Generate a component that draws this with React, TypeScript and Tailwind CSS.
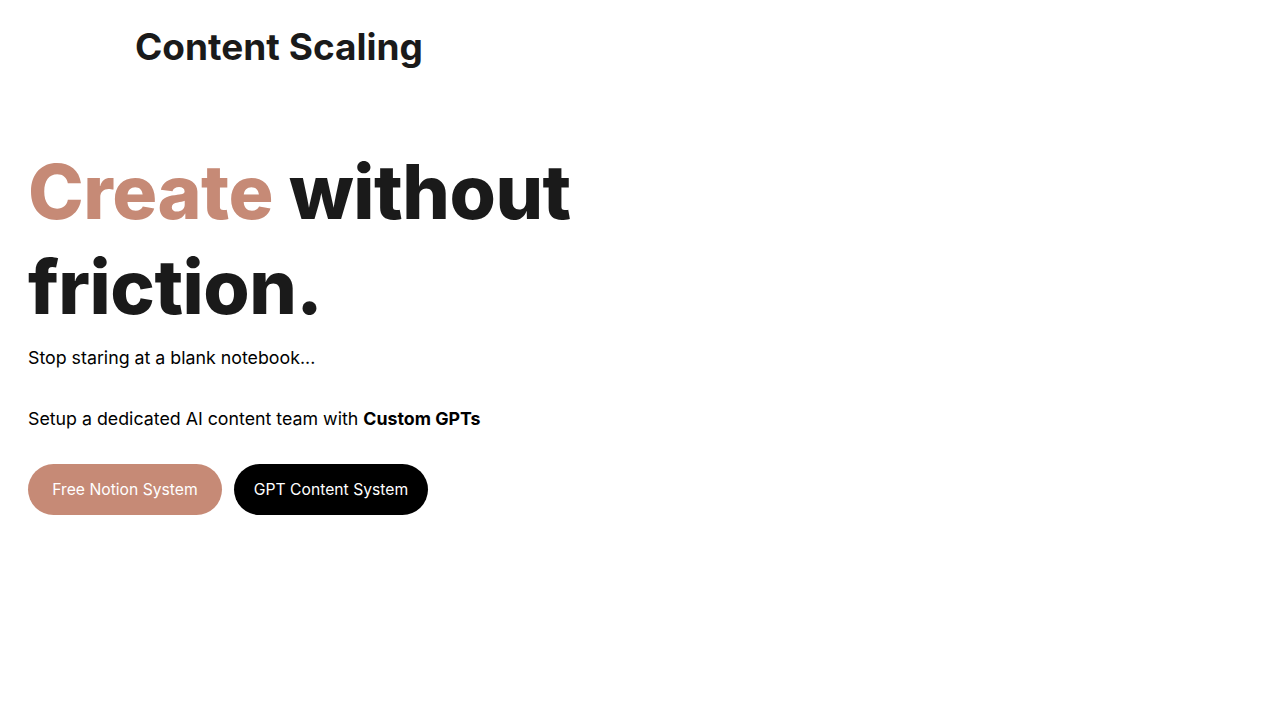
import React from "react";

export default function App() {
  return (
    <div className="min-h-[720px] bg-white text-[#1a1a1a]" style={{ fontFamily: "Inter, 'Noto Sans', sans-serif" }}>
      <header className="h-[92px] flex items-center pl-[135px]">
        <div className="text-[37px] font-bold leading-none tracking-[0px]">Content Scaling</div>
      </header>
      <main className="pl-[28px] pt-[52px]">
        <h1 className="text-[75px] font-extrabold leading-[95px] tracking-[-0.5px]">
          <span className="text-[#c68a76]">Create</span> without
          <br />
          friction.
        </h1>
        <p className="mt-[11px] text-[17.8px] leading-[26px] text-black">Stop staring at a blank notebook...</p>
        <p className="mt-[35px] text-[17.8px] leading-[26px] text-black">
          Setup a dedicated AI content team with <strong className="font-bold">Custom GPTs</strong>
        </p>
        <div className="mt-[32px] flex gap-[12px]">
          <button className="h-[51px] w-[194px] rounded-full bg-[#c68a76] text-white text-[15.7px]">Free Notion System</button>
          <button className="h-[51px] w-[194px] rounded-full bg-black text-white text-[15.7px]">GPT Content System</button>
        </div>
      </main>
    </div>
  );
}
